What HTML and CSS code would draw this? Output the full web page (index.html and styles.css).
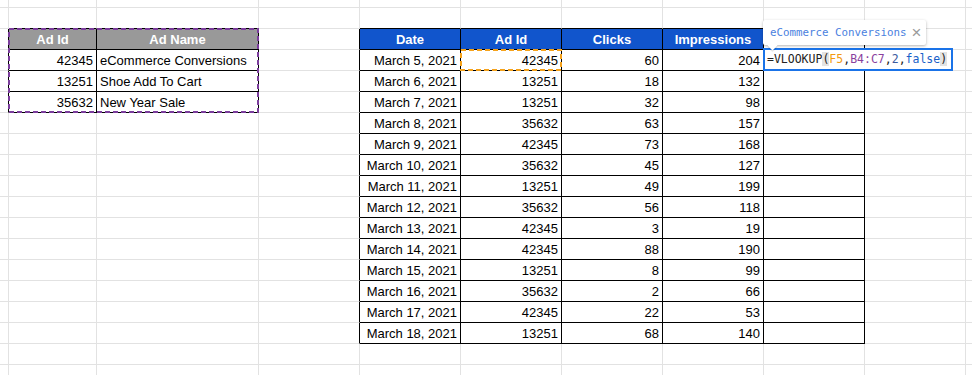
FILE: index.html
```html
<!DOCTYPE html>
<html>
<head>
<meta charset="utf-8">
<link rel="stylesheet" href="styles.css">
</head>
<body>
<div class="wrap">
<table class="sheet">
<colgroup>
<col class="c0"><col class="ca"><col class="cb"><col class="cn"><col class="cn"><col class="cn"><col class="cn"><col class="cn"><col class="cn"><col class="cn"><col class="cz">
</colgroup>
<tbody>
<tr class="r0"><td></td><td></td><td></td><td></td><td></td><td></td><td></td><td></td><td></td><td></td><td></td></tr>
<tr><td></td><td class="kb"></td><td class="kb"></td><td></td><td class="kb"></td><td class="kb"></td><td class="kb"></td><td class="kb"></td><td class="kb"></td><td></td><td></td></tr>
<tr><td class="kr"></td><td class="k hg">Ad Id</td><td class="k hg">Ad Name</td><td class="kr"></td><td class="k hb">Date</td><td class="k hb">Ad Id</td><td class="k hb">Clicks</td><td class="k hb">Impressions</td><td class="k"></td><td></td><td></td></tr>
<tr><td class="kr"></td><td class="k n">42345</td><td class="k">eCommerce Conversions</td><td class="kr"></td><td class="k n">March 5, 2021</td><td class="k n">42345</td><td class="k n">60</td><td class="k n">204</td><td class="k"></td><td></td><td></td></tr>
<tr><td class="kr"></td><td class="k n">13251</td><td class="k">Shoe Add To Cart</td><td class="kr"></td><td class="k n">March 6, 2021</td><td class="k n">13251</td><td class="k n">18</td><td class="k n">132</td><td class="k"></td><td></td><td></td></tr>
<tr><td class="kr"></td><td class="k n">35632</td><td class="k">New Year Sale</td><td class="kr"></td><td class="k n">March 7, 2021</td><td class="k n">13251</td><td class="k n">32</td><td class="k n">98</td><td class="k"></td><td></td><td></td></tr>
<tr><td></td><td></td><td></td><td class="kr"></td><td class="k n">March 8, 2021</td><td class="k n">35632</td><td class="k n">63</td><td class="k n">157</td><td class="k"></td><td></td><td></td></tr>
<tr><td></td><td></td><td></td><td class="kr"></td><td class="k n">March 9, 2021</td><td class="k n">42345</td><td class="k n">73</td><td class="k n">168</td><td class="k"></td><td></td><td></td></tr>
<tr><td></td><td></td><td></td><td class="kr"></td><td class="k n">March 10, 2021</td><td class="k n">35632</td><td class="k n">45</td><td class="k n">127</td><td class="k"></td><td></td><td></td></tr>
<tr><td></td><td></td><td></td><td class="kr"></td><td class="k n">March 11, 2021</td><td class="k n">13251</td><td class="k n">49</td><td class="k n">199</td><td class="k"></td><td></td><td></td></tr>
<tr><td></td><td></td><td></td><td class="kr"></td><td class="k n">March 12, 2021</td><td class="k n">35632</td><td class="k n">56</td><td class="k n">118</td><td class="k"></td><td></td><td></td></tr>
<tr><td></td><td></td><td></td><td class="kr"></td><td class="k n">March 13, 2021</td><td class="k n">42345</td><td class="k n">3</td><td class="k n">19</td><td class="k"></td><td></td><td></td></tr>
<tr><td></td><td></td><td></td><td class="kr"></td><td class="k n">March 14, 2021</td><td class="k n">42345</td><td class="k n">88</td><td class="k n">190</td><td class="k"></td><td></td><td></td></tr>
<tr><td></td><td></td><td></td><td class="kr"></td><td class="k n">March 15, 2021</td><td class="k n">13251</td><td class="k n">8</td><td class="k n">99</td><td class="k"></td><td></td><td></td></tr>
<tr><td></td><td></td><td></td><td class="kr"></td><td class="k n">March 16, 2021</td><td class="k n">35632</td><td class="k n">2</td><td class="k n">66</td><td class="k"></td><td></td><td></td></tr>
<tr><td></td><td></td><td></td><td class="kr"></td><td class="k n">March 17, 2021</td><td class="k n">42345</td><td class="k n">22</td><td class="k n">53</td><td class="k"></td><td></td><td></td></tr>
<tr><td></td><td></td><td></td><td class="kr"></td><td class="k n">March 18, 2021</td><td class="k n">13251</td><td class="k n">68</td><td class="k n">140</td><td class="k"></td><td></td><td></td></tr>
<tr><td></td><td></td><td></td><td></td><td></td><td></td><td></td><td></td><td></td><td></td><td></td></tr>
<tr><td></td><td></td><td></td><td></td><td></td><td></td><td></td><td></td><td></td><td></td><td></td></tr>
</tbody>
</table>

<svg class="copy-range" width="251" height="85" viewBox="0 0 251 85"><rect x="1" y="1" width="249" height="83" fill="none" stroke="#7b3d9c" stroke-width="2" stroke-dasharray="5 3"/></svg>
<svg class="ref-range" width="102" height="22" viewBox="0 0 102 22"><rect x="1" y="1" width="100" height="20" fill="none" stroke="#f5a21b" stroke-width="2" stroke-dasharray="5 3"/></svg>

<div class="editor"><span class="tx">=VLOOKUP</span><span class="par">(</span><span class="ref-o">F5</span><span class="tx">,</span><span class="ref-p">B4:C7</span><span class="tx">,</span><span class="num">2</span><span class="tx">,</span><span class="kw">false</span><span class="par">)</span></div>

<div class="tip"><span class="tip-text">eCommerce Conversions</span><span class="tip-x">×</span><span class="tip-arrow"></span></div>
</div>
</body>
</html>
```

FILE: styles.css
```css
html, body {
  margin: 0;
  padding: 0;
  background: #fff;
  overflow: hidden;
}

.wrap {
  position: relative;
  width: 972px;
  height: 375px;
  overflow: hidden;
}

.sheet {
  border-collapse: separate;
  border-spacing: 0;
  table-layout: fixed;
  width: 980px;
  font-family: "Liberation Sans", Arial, sans-serif;
  font-size: 13px;
  color: #000;
}

.c0 { width: 9px; }
.ca { width: 88px; }
.cb { width: 162px; }
.cn { width: 101px; }
.cz { width: 14px; }

.sheet tr { height: 21px; }
.sheet tr.r0 { height: 8px; }

.sheet td {
  border-right: 1px solid #e2e2e2;
  border-bottom: 1px solid #e2e2e2;
  padding: 0 3px 2px 3px;
  vertical-align: bottom;
  white-space: nowrap;
  overflow: hidden;
  line-height: 15px;
}

.sheet td.k { border-right-color: #000; border-bottom-color: #000; }
.sheet td.kb { border-bottom-color: #000; }
.sheet td.kr { border-right-color: #000; }

.sheet td.n { text-align: right; }

.sheet td.hg {
  background: #999999;
  color: #fff;
  font-weight: bold;
  text-align: center;
}

.sheet td.hb {
  background: #1155cc;
  color: #fff;
  font-weight: bold;
  text-align: center;
}

.copy-range {
  position: absolute;
  left: 8px;
  top: 28px;
}

.ref-range {
  position: absolute;
  left: 460px;
  top: 49px;
}

.editor {
  position: absolute;
  left: 763px;
  top: 48px;
  width: 190px;
  height: 23px;
  box-sizing: border-box;
  border: 2px solid #1a73e8;
  background: #fff;
  padding: 0 0 0 2px;
  font-family: "DejaVu Sans Mono", "Liberation Mono", monospace;
  font-size: 11.5px;
  line-height: 19px;
  white-space: nowrap;
  color: #222;
}

.editor .par { background: #e3e3e3; }
.editor .ref-o { color: #f29a10; }
.editor .ref-p { color: #8a3f9e; }
.editor .num { color: #3c5a9e; }
.editor .kw { color: #1a5fc8; }

.tip {
  position: absolute;
  left: 763px;
  top: 20px;
  width: 163px;
  height: 25px;
  box-sizing: border-box;
  background: #fff;
  border-radius: 2px;
  box-shadow: 0 1px 3px rgba(0, 0, 0, 0.3);
  padding: 0 0 0 7px;
  display: flex;
  align-items: center;
  font-family: "DejaVu Sans Mono", "Liberation Mono", monospace;
  font-size: 10.8px;
  color: #4a7fe0;
  white-space: nowrap;
}

.tip-x {
  margin-left: 5px;
  font-family: "Liberation Sans", Arial, sans-serif;
  font-size: 17px;
  color: #9a9a9a;
}

.tip-arrow {
  position: absolute;
  left: 6px;
  bottom: -4px;
  width: 7px;
  height: 7px;
  background: #fff;
  transform: rotate(45deg);
  box-shadow: 1px 1px 1px rgba(0, 0, 0, 0.15);
}
```
